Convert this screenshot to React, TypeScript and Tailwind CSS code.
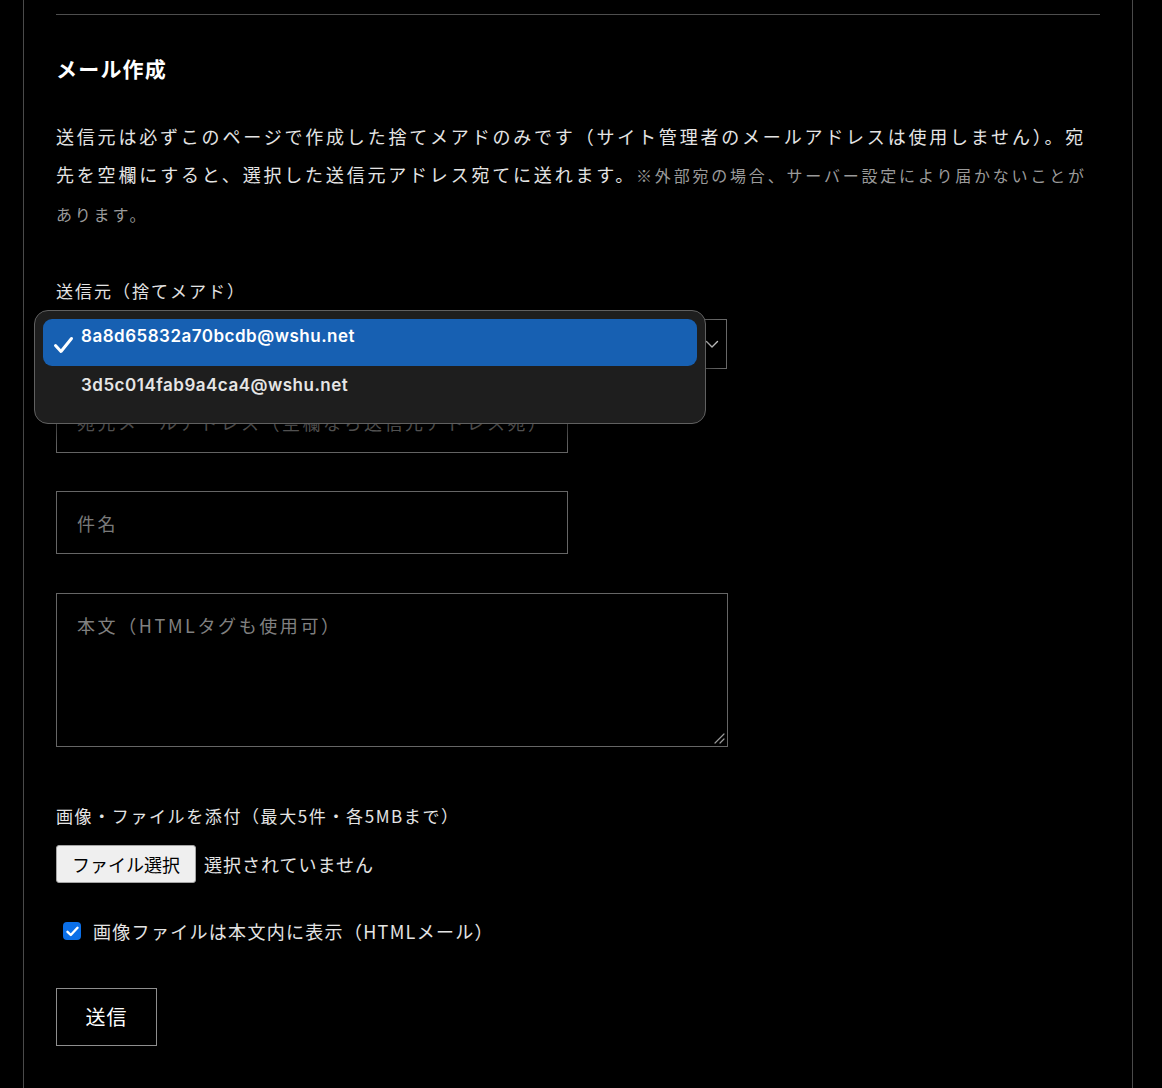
import React from 'react';

const jp = "font-['Noto_Sans_CJK_JP',sans-serif]";

function Chevron() {
  return (
    <svg width="14" height="10" viewBox="0 0 14 10" fill="none">
      <path d="M1.5 2.5 L7 8 L12.5 2.5" stroke="#d8d8d8" strokeWidth="1.4" strokeLinecap="round" strokeLinejoin="round" />
    </svg>
  );
}

function SelectPopup() {
  // macOS native popup menu drawn over the select
  return (
    <div className="absolute -left-[23px] -top-[10px] w-[672px] h-[114px] rounded-[14px] border border-[#606060] bg-[#1e1e1e] p-[8px] shadow-[0_8px_24px_rgba(0,0,0,0.6)] font-['Inter',sans-serif]">
      <div className="relative h-[47px] rounded-[9px] bg-[#1760b2] flex items-center pl-[38px] text-white text-[17px] tracking-[0.5px] font-semibold">
        <svg className="absolute left-[10px] top-[17px]" width="21" height="18" viewBox="0 0 21 18" fill="none">
          <path d="M2.5 9.5 L8 15.5 L18.5 2.5" stroke="white" strokeWidth="3" strokeLinecap="round" strokeLinejoin="round" />
        </svg>
        <span className="-mt-[12px]">8a8d65832a70bcdb@wshu.net</span>
      </div>
      <div className="h-[40px] flex items-center pl-[38px] text-[#e6e6e6] text-[17px] tracking-[0.5px] font-semibold">
        3d5c014fab9a4ca4@wshu.net
      </div>
    </div>
  );
}

export default function App() {
  return (
    <div className={`min-h-screen bg-black ${jp}`}>
      <div className="ml-[23px] w-[1110px] min-h-[1088px] border-x border-[#4a4a4a] px-[32px] pt-[14px]">
        <div className="border-t border-[#4e4e4e]" />

        <h2 className="mt-[38px] text-[21px] leading-[30px] font-bold text-white tracking-[1.2px]">メール作成</h2>

        <p className="mt-[34px] text-[18px] leading-[38px] text-[#e4e4e4] tracking-[2.8px]">
          送信元は必ずこのページで作成した捨てメアドのみです（サイト管理者のメールアドレスは使用しません）。宛先を空欄にすると、選択した送信元アドレス宛てに送れます。
          <span className="text-[16px] text-[#9a9a9a]">※外部宛の場合、サーバー設定により届かないことがあります。</span>
        </p>

        <div className="mt-[45px] text-[17px] leading-[26px] text-[#e4e4e4] tracking-[2px]">送信元（捨てメアド）</div>

        <div className="relative mt-[15px] w-[671px] h-[50px] border border-[#6a6a6a] flex items-center justify-end pr-[7px]">
          <Chevron />
          <SelectPopup />
        </div>

        <input
          className="block mt-[21px] w-[512px] h-[63px] border border-[#666] bg-black px-[20px] text-[18px] tracking-[2.5px] text-white placeholder:text-[#7a7a7a] outline-none"
          placeholder="宛先メールアドレス（空欄なら送信元アドレス宛）"
        />
        <input
          className="block mt-[38px] w-[512px] h-[63px] border border-[#666] bg-black px-[20px] text-[18px] tracking-[2.5px] text-white placeholder:text-[#7a7a7a] outline-none"
          placeholder="件名"
        />

        <div className="relative mt-[39px] w-[672px] h-[154px] border border-[#666]">
          <div className="pl-[20px] pt-[17px] text-[18px] leading-[28px] tracking-[2.6px] text-[#808080]">本文（HTMLタグも使用可）</div>
          <svg className="absolute right-[2px] bottom-[2px]" width="11" height="11" viewBox="0 0 11 11" fill="none">
            <path d="M10 1 L1 10 M10 6 L6 10" stroke="#9a9a9a" strokeWidth="1.2" strokeLinecap="round" />
          </svg>
        </div>

        <div className="mt-[56px] text-[17px] leading-[26px] text-[#e4e4e4] tracking-[1.6px]">画像・ファイルを添付（最大5件・各5MBまで）</div>

        <div className="mt-[16px] flex items-center gap-[8px]">
          <button className="h-[38px] px-[15px] rounded-[3px] border border-[#a5a5a5] bg-[#efefef] text-[18px] text-black">ファイル選択</button>
          <span className="text-[18px] text-[#e4e4e4] tracking-[1px]">選択されていません</span>
        </div>

        <div className="mt-[35px] flex items-center gap-[12px] pl-[7px] h-[26px]">
          <div className="w-[18px] h-[18px] rounded-[4px] bg-[#0b6fe8] flex items-center justify-center">
            <svg width="13" height="11" viewBox="0 0 13 11" fill="none">
              <path d="M1.5 5.8 L4.8 9 L11.5 1.8" stroke="white" strokeWidth="2.4" strokeLinecap="round" strokeLinejoin="round" />
            </svg>
          </div>
          <span className="text-[18px] text-[#e4e4e4] tracking-[1.3px]">画像ファイルは本文内に表示（HTMLメール）</span>
        </div>

        <button className="mt-[44px] w-[101px] h-[58px] border border-[#8e8e8e] text-[20px] text-white tracking-[1px]">送信</button>
      </div>
    </div>
  );
}
